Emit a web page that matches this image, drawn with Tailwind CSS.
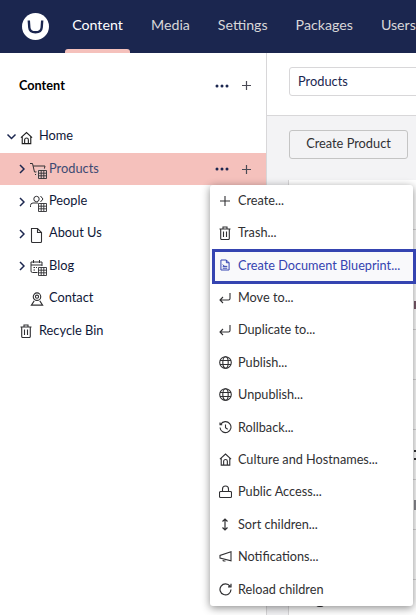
<!doctype html>
<html>
<head>
<meta charset="utf-8">
<script src="https://cdn.jsdelivr.net/npm/@tailwindcss/browser@4"></script>
</head>
<body class="font-['Lato',sans-serif] overflow-hidden">
<div class="relative w-[416px] h-[615px] overflow-hidden bg-white text-[#1b264f] flex flex-col">
  <header class="h-[53px] shrink-0 bg-[#1b264f] flex items-center">
    <svg class="ml-[22px] w-[27px] h-[27px] shrink-0" viewBox="0 0 27 27"><circle cx="13.5" cy="13.500" r="13.500" fill="#fff"/><path d="M6.800 7.500 L7.300 14.500 Q7.600 19.300 13.500 19.300 Q19.400 19.300 19.700 14.500 L20.200 7.500" fill="none" stroke="#1b264f" stroke-width="2.400"/></svg>
    <nav class="ml-[16px] flex h-full text-[14.2px] text-[#d8d7d9] whitespace-nowrap">
      <a class="relative w-[65px] pb-[3px] flex items-center justify-center text-white">Content<span class="absolute bottom-0 left-0 right-0 h-1 bg-[#f5c1bc] rounded-t-[3px]"></span></a>
      <a class="ml-[21px] pb-[3px] flex items-center">Media</a>
      <a class="ml-[28px] pb-[3px] flex items-center">Settings</a>
      <a class="ml-[28px] pb-[3px] flex items-center">Packages</a>
      <a class="ml-[28px] pb-[3px] flex items-center">Users</a>
    </nav>
  </header>
  <div class="flex flex-1 min-h-0">
    <aside class="w-[267px] shrink-0 bg-white border-r border-[#d8d7d9] pt-[20px]">
      <div class="h-[25px] pl-[19px] pr-[14px] flex items-center text-[12.7px] font-bold text-black">
        <span>Content</span>
        <span class="ml-auto flex items-center gap-[12px] text-[#1b264f]">
          <svg class="w-[14px] h-[4px]" viewBox="0 0 14 4"><circle cx="2" cy="2" r="1.500" fill="#1b264f"/><circle cx="7" cy="2" r="1.500" fill="#1b264f"/><circle cx="12" cy="2" r="1.500" fill="#1b264f"/></svg>
          <svg class="w-[11px] h-[11px]" viewBox="0 0 11 11"><path d="M5.500 1v9M1 5.500h9" stroke="#4a4a55" stroke-width="1.200"/></svg>
        </span>
      </div>
      <div class="mt-[22.6px] text-[12.8px]">
        <div class="h-[32.4px] flex items-center pl-[6px]">
          <svg class="w-[11px] h-[11px]" viewBox="0 0 11 11"><path d="M1.500 3.500 5.500 7.500 9.500 3.500" fill="none" stroke="#1b264f" stroke-width="1.500"/></svg>
          <svg class="ml-[3px] w-[13px] h-[14px] relative top-[1px]" viewBox="0 0 14 14" fill="none" stroke="#1f1f1f" stroke-width="1.200"><path d="M1 6.600 7 1.200l6 5.400M2.400 5.600V13h9.200V5.600M5 13V9a2 2 0 0 1 4 0v4"/></svg>
          <span class="ml-[6px] relative top-[-1px] text-[#0f1838]">Home</span>
        </div>
        <div class="h-[32.4px] flex items-center pl-[19px] bg-[#f5c1bc]">
          <svg class="w-[6px] h-[10px]" viewBox="0 0 6 10"><path d="M1 1l4 4-4 4" fill="none" stroke="#1b264f" stroke-width="1.500"/></svg>
          <svg class="ml-[5px] w-[18px] h-[20px]" viewBox="0 0 18 20" fill="none" stroke="#303033" stroke-width="1"><path d="M0 4.500h2.500L4.500 13h9L15 7H3.200M5 15.500h1.500"/><circle cx="12" cy="15" r="6" fill="#e8c8c7" stroke="none"/><path d="M8.500 11.500h8v8h-8zM8.500 14.200h8M8.500 16.800h8M11.200 11.500v8M13.800 11.500v8" stroke-width=".9"/></svg>
          <span class="ml-[1px] relative top-[-1px] text-[#3d4a73]">Products</span>
          <span class="ml-auto mr-[14px] flex items-center gap-[12px]">
            <svg class="w-[14px] h-[4px]" viewBox="0 0 14 4"><circle cx="2" cy="2" r="1.500" fill="#1b264f"/><circle cx="7" cy="2" r="1.500" fill="#1b264f"/><circle cx="12" cy="2" r="1.500" fill="#1b264f"/></svg>
            <svg class="w-[11px] h-[11px]" viewBox="0 0 11 11"><path d="M5.500 1v9M1 5.500h9" stroke="#4a4a55" stroke-width="1.200"/></svg>
          </span>
        </div>
        <div class="h-[32.4px] flex items-center pl-[19px]">
          <svg class="w-[6px] h-[10px]" viewBox="0 0 6 10"><path d="M1 1l4 4-4 4" fill="none" stroke="#1b264f" stroke-width="1.500"/></svg>
          <svg class="ml-[5px] w-[18px] h-[20px]" viewBox="0 0 18 20" fill="none" stroke="#303033" stroke-width="1"><circle cx="6.500" cy="7" r="2.700"/><path d="M.5 15v-1.500q0-2.500 2.500-2.500h5M10.500 4l2.500 3-2.500 3"/><path d="M8.500 11.500h8v8h-8zM8.500 14.200h8M8.500 16.800h8M11.200 11.500v8M13.800 11.500v8" stroke-width=".9"/></svg>
          <span class="ml-[1px] relative top-[-1px] text-[#0f1838]">People</span>
        </div>
        <div class="h-[32.4px] flex items-center pl-[19px]">
          <svg class="w-[6px] h-[10px]" viewBox="0 0 6 10"><path d="M1 1l4 4-4 4" fill="none" stroke="#1b264f" stroke-width="1.500"/></svg>
          <svg class="ml-[5px] w-[18px] h-[18px] relative top-[1px]" viewBox="0 0 18 18" fill="none" stroke="#303033" stroke-width="1.100"><path d="M1.500 2.500h6l4 4v9a1 1 0 0 1-1 1h-8a1 1 0 0 1-1-1zM7.500 2.500v4h4"/></svg>
          <span class="ml-[1px] relative top-[-1px] text-[#0f1838]">About Us</span>
        </div>
        <div class="h-[32.4px] flex items-center pl-[19px]">
          <svg class="w-[6px] h-[10px]" viewBox="0 0 6 10"><path d="M1 1l4 4-4 4" fill="none" stroke="#1b264f" stroke-width="1.500"/></svg>
          <svg class="ml-[5px] w-[18px] h-[20px]" viewBox="0 0 18 20" fill="none" stroke="#303033" stroke-width="1"><path d="M7.500 16.500h-5a1.500 1.500 0 0 1-1.500-1.500V6h11v4M1 9h11M3.500 4v3M9.500 4v3M3.500 11.500h1.500M3.500 14h1.500M6 11.500h1"/><path d="M8.500 11.500h8v8h-8zM8.500 14.200h8M8.500 16.800h8M11.200 11.500v8M13.800 11.500v8" stroke-width=".9" fill="#fff"/></svg>
          <span class="ml-[1px] relative top-[-1px] text-[#0f1838]">Blog</span>
        </div>
        <div class="h-[32.4px] flex items-center pl-[30px]">
          <svg class="w-[14px] h-[14px]" viewBox="0 0 14 15" fill="none" stroke="#303033" stroke-width="1.200"><circle cx="7" cy="5" r="4"/><circle cx="7" cy="5" r="1.700"/><path d="M4 9.500 1 14h12L10 9.500"/></svg>
          <span class="ml-[5px] relative top-[-1px] text-[#0f1838]">Contact</span>
        </div>
        <div class="h-[32.4px] flex items-center pl-[20px]">
          <svg class="w-[12px] h-[14px]" viewBox="0 0 12 14" fill="none" stroke="#303033" stroke-width="1.100"><path d="M.5 3h11M4 3V1h4v2M1.700 3v9.500a1 1 0 0 0 1 1h6.600a1 1 0 0 0 1-1V3M4.500 5.500v5.500M7.500 5.500v5.500"/></svg>
          <span class="ml-[7px] relative top-[-1px] text-[#0f1838]">Recycle Bin</span>
        </div>
      </div>
    </aside>
    <main class="flex-1 min-w-0 bg-[#f3f3f5] text-[12.8px]">
      <div class="h-[63px] bg-white border-b border-[#d8d7d9] pt-[14px] pl-[22px]">
        <div class="h-[29px] w-[200px] border border-[#d8d7d9] rounded-[3px] pl-[8px] flex items-center text-[#1b264f]">Products</div>
      </div>
      <div class="pl-[22px] pt-[14px]">
        <div class="h-[29px] w-[119px] pb-[1px] border border-[#c4c4c4] rounded-[3px] flex items-center justify-center text-[#303033] bg-[#f3f3f5]">Create Product</div>
      </div>
      <div class="mt-[21px] ml-[21px] bg-white h-[450px] flex flex-col border-l border-[#d8d7d9] overflow-hidden">
        <div class="h-[50px] shrink-0 border-b border-[#d8d7d9]"></div>
        <div class="h-[50px] shrink-0 border-b border-[#d8d7d9]"></div>
        <div class="h-[50px] shrink-0 border-b border-[#d8d7d9] flex items-center"><span class="ml-[125px] w-[3px] h-[8px] bg-[#7a5a6a]"></span></div>
        <div class="h-[50px] shrink-0 border-b border-[#d8d7d9]"></div>
        <div class="h-[50px] shrink-0 border-b border-[#d8d7d9]"></div>
        <div class="h-[50px] shrink-0 border-b border-[#d8d7d9] flex items-center"><span class="ml-[125px] w-[3px] h-[10px] border-y-2 border-[#303033]"></span></div>
        <div class="h-[50px] shrink-0 border-b border-[#d8d7d9] flex items-center"><span class="ml-[125px] w-[3px] h-[10px] bg-[#8a8a90]"></span></div>
        <div class="h-[50px] shrink-0 border-b border-[#d8d7d9]"></div>
        <div class="h-[50px] shrink-0 pt-[24px]"><span class="block ml-[27px] w-[8px] h-[3px] border-b-2 border-x border-[#303033] rounded-b-[3px]"></span></div>
      </div>
    </main>
  </div>

  <div class="absolute left-[210px] top-[185px] w-[203px] h-[421px] bg-white rounded-[3px] shadow-[0_2px_9px_rgba(0,0,0,0.45)] text-[12.7px] text-[#303033]">
    <div class="h-[31.6px] flex items-center"><span class="w-[28px] pl-[2px] flex justify-center"><svg class="w-[12px] h-[12px]" viewBox="0 0 12 12"><path d="M6 1v10M1 6h10" stroke="#303033" stroke-width="1.100"/></svg></span><span>Create...</span></div>
    <div class="h-[32.4px] flex items-center"><span class="w-[28px] pl-[2px] flex justify-center"><svg class="w-[12px] h-[14px]" viewBox="0 0 12 14" fill="none" stroke="#303033" stroke-width="1.100"><path d="M.5 3h11M4 3V1h4v2M1.700 3v9.500a1 1 0 0 0 1 1h6.600a1 1 0 0 0 1-1V3M4.500 5.500v5.500M7.500 5.500v5.500"/></svg></span><span>Trash...</span></div>
    <div class="relative h-[32.4px] flex items-center text-[#3544b1] bg-[#f9f9fb]">
      <span class="w-[28px] pl-[2px] flex justify-center"><svg class="w-[10px] h-[12px]" viewBox="0 0 11 13" fill="none" stroke="#3544b1" stroke-width="1.100"><path d="M1 1h6l3 3v8H1zM7 1v3h3M3 6l2 2 M3 8h5M3 10h5"/></svg></span><span>Create Document Blueprint...</span>
      <span class="absolute left-[2px] top-[-0.2px] w-[204px] h-[35px] border-[3px] border-[#3544b1]"></span>
    </div>
    <div class="h-[32.4px] flex items-center"><span class="w-[28px] pl-[2px] flex justify-center"><svg class="w-[12px] h-[12px]" viewBox="0 0 12 12" fill="none" stroke="#303033" stroke-width="1.100"><path d="M11 1v5.500q0 1.500-1.500 1.500H1M4 5 1 8l3 3"/></svg></span><span>Move to...</span></div>
    <div class="h-[32.4px] flex items-center"><span class="w-[28px] pl-[2px] flex justify-center"><svg class="w-[12px] h-[12px]" viewBox="0 0 12 12" fill="none" stroke="#303033" stroke-width="1.100"><path d="M11 1v5.500q0 1.500-1.500 1.500H1M4 5 1 8l3 3"/></svg></span><span>Duplicate to...</span></div>
    <div class="h-[32.4px] flex items-center"><span class="w-[28px] pl-[2px] flex justify-center"><svg class="w-[13px] h-[13px]" viewBox="0 0 13 13" fill="none" stroke="#303033" stroke-width="1.100"><circle cx="6.500" cy="6.500" r="5.800"/><ellipse cx="6.500" cy="6.500" rx="2.700" ry="5.800"/><path d="M1 4.500h11M1 8.500h11"/></svg></span><span>Publish...</span></div>
    <div class="h-[32.4px] flex items-center"><span class="w-[28px] pl-[2px] flex justify-center"><svg class="w-[13px] h-[13px]" viewBox="0 0 13 13" fill="none" stroke="#303033" stroke-width="1.100"><circle cx="6.500" cy="6.500" r="5.800"/><ellipse cx="6.500" cy="6.500" rx="2.700" ry="5.800"/><path d="M1 4.500h11M1 8.500h11"/></svg></span><span>Unpublish...</span></div>
    <div class="h-[32.4px] flex items-center"><span class="w-[28px] pl-[2px] flex justify-center"><svg class="w-[13px] h-[13px]" viewBox="0 0 13 13" fill="none" stroke="#303033" stroke-width="1.100"><path d="M1.800 3.200A5.500 5.500 0 1 1 1 6.500M1 1.500v2.200h2.200M6.500 3.500v3.300l2.200 1.400"/></svg></span><span>Rollback...</span></div>
    <div class="h-[32.4px] flex items-center"><span class="w-[28px] pl-[2px] flex justify-center"><svg class="w-[13px] h-[13px]" viewBox="0 0 14 14" fill="none" stroke="#303033" stroke-width="1.200"><path d="M1 6.600 7 1.200l6 5.400M2.400 5.600V13h9.200V5.600M5 13V9a2 2 0 0 1 4 0v4"/></svg></span><span>Culture and Hostnames...</span></div>
    <div class="h-[32.4px] flex items-center"><span class="w-[28px] pl-[2px] flex justify-center"><svg class="w-[13px] h-[14px]" viewBox="0 0 13 14" fill="none" stroke="#303033" stroke-width="1.100"><path d="M3.500 6.500V4a3 3 0 0 1 6 0v2.500M1.500 6.500h10a1 1 0 0 1 1 1v4a1 1 0 0 1-1 1h-10a1 1 0 0 1-1-1v-4a1 1 0 0 1 1-1z"/></svg></span><span>Public Access...</span></div>
    <div class="h-[32.4px] flex items-center"><span class="w-[28px] pl-[2px] flex justify-center"><svg class="w-[8px] h-[13px]" viewBox="0 0 8 13" fill="none" stroke="#303033" stroke-width="1.200"><path d="M4 1v11M1.500 3.500 4 1l2.500 2.500M1.500 9.500 4 12l2.500-2.500"/></svg></span><span>Sort children...</span></div>
    <div class="h-[32.4px] flex items-center"><span class="w-[28px] pl-[2px] flex justify-center"><svg class="w-[13px] h-[11px]" viewBox="0 0 13 11" fill="none" stroke="#303033" stroke-width="1.100"><path d="M12 .8v9L1 7V4.500zM4 7.500v1.500q0 1 1 1h1.500"/></svg></span><span>Notifications...</span></div>
    <div class="h-[32.4px] flex items-center"><span class="w-[28px] pl-[2px] flex justify-center"><svg class="w-[13px] h-[13px]" viewBox="0 0 13 13" fill="none" stroke="#303033" stroke-width="1.200"><path d="M11 3.200A5.500 5.500 0 1 0 12 6.500M12 .8v3h-3"/></svg></span><span>Reload children</span></div>
  </div>
</div>
</body>
</html>
